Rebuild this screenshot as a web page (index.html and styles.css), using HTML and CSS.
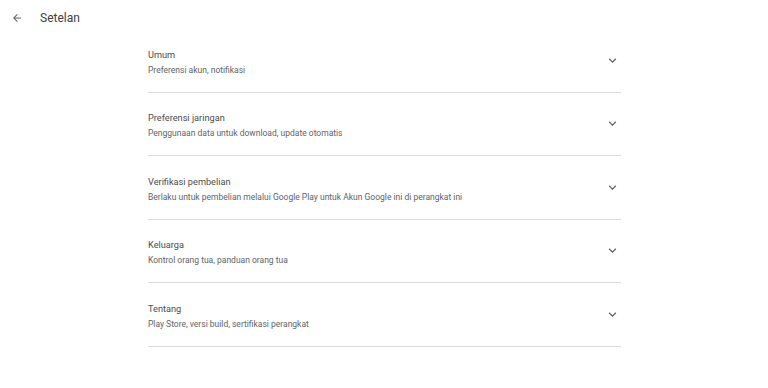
FILE: index.html
```html
<!DOCTYPE html>
<html lang="id">
<head>
    <meta charset="UTF-8">
    <title>Setelan</title>
    <link rel="stylesheet" href="styles.css">
</head>
<body>
    <div class="topbar">
        <svg class="back" viewBox="0 0 24 24" width="12" height="12">
            <path d="M20 11H7.83l5.59-5.59L12 4l-8 8 8 8 1.41-1.41L7.83 13H20v-2z" fill="#5f6368"/>
        </svg>
        <span class="title">Setelan</span>
    </div>

    <div class="list">
        <div class="item">
            <div class="texts">
                <div class="name">Umum</div>
                <div class="desc">Preferensi akun, notifikasi</div>
            </div>
            <svg class="chev" viewBox="0 0 24 24" width="15" height="15"><path d="M7.41 8.59 12 13.17l4.59-4.58L18 10l-6 6-6-6z" fill="#5f6368"/></svg>
        </div>
        <div class="item">
            <div class="texts">
                <div class="name">Preferensi jaringan</div>
                <div class="desc">Penggunaan data untuk download, update otomatis</div>
            </div>
            <svg class="chev" viewBox="0 0 24 24" width="15" height="15"><path d="M7.41 8.59 12 13.17l4.59-4.58L18 10l-6 6-6-6z" fill="#5f6368"/></svg>
        </div>
        <div class="item">
            <div class="texts">
                <div class="name">Verifikasi pembelian</div>
                <div class="desc">Berlaku untuk pembelian melalui Google Play untuk Akun Google ini di perangkat ini</div>
            </div>
            <svg class="chev" viewBox="0 0 24 24" width="15" height="15"><path d="M7.41 8.59 12 13.17l4.59-4.58L18 10l-6 6-6-6z" fill="#5f6368"/></svg>
        </div>
        <div class="item">
            <div class="texts">
                <div class="name">Keluarga</div>
                <div class="desc">Kontrol orang tua, panduan orang tua</div>
            </div>
            <svg class="chev" viewBox="0 0 24 24" width="15" height="15"><path d="M7.41 8.59 12 13.17l4.59-4.58L18 10l-6 6-6-6z" fill="#5f6368"/></svg>
        </div>
        <div class="item">
            <div class="texts">
                <div class="name">Tentang</div>
                <div class="desc">Play Store, versi build, sertifikasi perangkat</div>
            </div>
            <svg class="chev" viewBox="0 0 24 24" width="15" height="15"><path d="M7.41 8.59 12 13.17l4.59-4.58L18 10l-6 6-6-6z" fill="#5f6368"/></svg>
        </div>
    </div>
</body>
</html>
```

FILE: styles.css
```css
body {
    margin: 0;
    background: #fff;
    font-family: Roboto, "Liberation Sans", sans-serif;
    color: #3c4043;
}

.topbar {
    height: 36px;
    display: flex;
    align-items: center;
    padding-left: 11px;
}

.back {
    display: block;
}

.title {
    margin-left: 17px;
    font-size: 12px;
    color: #3c4043;
}

.list {
    width: 473px;
    margin-left: 148px;
    margin-top: -7px;
}

.item {
    height: 62.5px;
    border-bottom: 1px solid #dadce0;
    display: flex;
    align-items: center;
    justify-content: space-between;
}

.texts {
    padding-top: 3px;
}

.name {
    font-size: 9.2px;
    color: #4a4d51;
    line-height: 14px;
}

.desc {
    font-size: 8.5px;
    color: #5f6368;
    line-height: 12px;
    margin-top: 2px;
}

.chev {
    margin-right: 1px;
    display: block;
}
```
